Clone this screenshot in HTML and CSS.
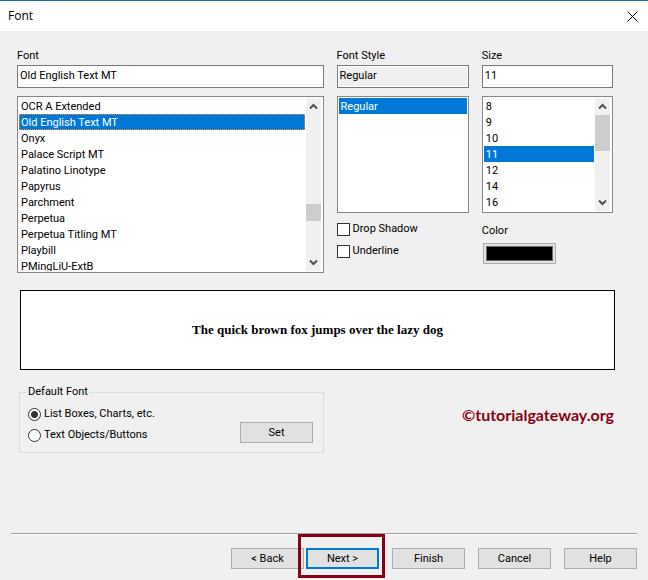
FILE: index.html
```html
<!DOCTYPE html>
<html lang="en">
<head>
<meta charset="utf-8">
<meta name="viewport" content="width=device-width, initial-scale=1">
<title>Font</title>
<link rel="stylesheet" href="styles.css">
</head>
<body>
<form class="dialog">
  <header class="titlebar">
    <h1 class="title">Font</h1>
    <button type="button" class="close" aria-label="Close">
      <svg width="11" height="11" viewBox="0 0 11 11" fill="none" stroke="#000"><path d="M.5 .5l10 10M10.5 .5l-10 10"/></svg>
    </button>
  </header>

  <main class="content">
    <div class="pickers">
      <section class="column">
        <label for="font-name">Font</label>
        <input class="field" id="font-name" type="text" value="Old English Text MT">
        <div class="listbox tall">
          <select size="11" aria-label="Fonts" class="focused">
            <option>OCR A Extended</option>
            <option selected>Old English Text MT</option>
            <option>Onyx</option>
            <option>Palace Script MT</option>
            <option>Palatino Linotype</option>
            <option>Papyrus</option>
            <option>Parchment</option>
            <option>Perpetua</option>
            <option>Perpetua Titling MT</option>
            <option>Playbill</option>
            <option>PMingLiU-ExtB</option>
          </select>
          <div class="scrollbar" aria-hidden="true">
            <svg class="arrow" viewBox="0 0 15 17"><path d="M4 10.500l3.500-3.500 3.500 3.500"/></svg>
            <div class="track late"><div class="thumb"></div></div>
            <svg class="arrow" viewBox="0 0 15 17"><path d="M4 6.500l3.500 3.500 3.500-3.500"/></svg>
          </div>
        </div>
      </section>

      <section class="column">
        <label for="font-style">Font Style</label>
        <input class="field readonly" id="font-style" type="text" value="Regular" readonly>
        <div class="listbox">
          <select size="7" aria-label="Font styles">
            <option selected>Regular</option>
          </select>
        </div>
        <div class="checks">
          <label class="choice"><input type="checkbox">Drop Shadow</label>
          <label class="choice"><input type="checkbox">Underline</label>
        </div>
      </section>

      <section class="column">
        <label for="font-size">Size</label>
        <input class="field" id="font-size" type="text" value="11">
        <div class="listbox">
          <select size="7" aria-label="Sizes">
            <option>8</option>
            <option>9</option>
            <option>10</option>
            <option selected>11</option>
            <option>12</option>
            <option>14</option>
            <option>16</option>
          </select>
          <div class="scrollbar" aria-hidden="true">
            <svg class="arrow" viewBox="0 0 15 17"><path d="M4 10.500l3.500-3.500 3.500 3.500"/></svg>
            <div class="track"><div class="thumb"></div></div>
            <svg class="arrow" viewBox="0 0 15 17"><path d="M4 6.500l3.500 3.500 3.500-3.500"/></svg>
          </div>
        </div>
        <div class="color">
          <label for="color">Color</label>
          <button type="button" class="button swatch" id="color"><span class="ink"></span></button>
        </div>
      </section>
    </div>

    <p class="preview">The quick brown fox jumps over the lazy dog</p>

    <div class="lower">
      <fieldset class="group">
        <legend>Default Font</legend>
        <div class="radios">
          <label class="choice"><input type="radio" name="target" checked>List Boxes, Charts, etc.</label>
          <label class="choice"><input type="radio" name="target">Text Objects/Buttons</label>
        </div>
        <button type="button" class="button">Set</button>
      </fieldset>
      <p class="credit">©tutorialgateway.org</p>
    </div>
  </main>

  <footer class="actions">
    <div class="pair">
      <button type="button" class="button">&lt; Back</button>
      <div class="marked"><button type="submit" class="button default">Next &gt;</button></div>
    </div>
    <button type="button" class="button">Finish</button>
    <button type="button" class="button">Cancel</button>
    <button type="button" class="button">Help</button>
  </footer>
</form>
</body>
</html>
```

FILE: styles.css
```css
* { box-sizing: border-box; }

body {
  margin: 0;
  background: #f0f0f0;
  color: #000;
  font: 11px/16px Roboto, "Liberation Sans", sans-serif;
}

input, select, button { font: inherit; color: inherit; margin: 0; }
p, h1 { margin: 0; }

.dialog {
  display: flex;
  flex-direction: column;
  min-height: 100vh;
  border-top: 1px solid #1a6fb8;
}

.titlebar {
  display: flex;
  align-items: center;
  justify-content: space-between;
  height: 30px;
  padding: 0 10px 0 8px;
  background: #fff;
}

.title { font: 12px/16px "Open Sans", "Noto Sans", sans-serif; }

.close {
  display: flex;
  padding: 0;
  border: 0;
  background: none;
}

.content { flex: 1; padding: 17px 33px 0 17px; }

.pickers {
  display: grid;
  grid-template-columns: 306fr 132fr 131fr;
  gap: 13px;
  padding-right: 2px;
}

.column { display: flex; flex-direction: column; min-width: 0; }

.field {
  width: 100%;
  height: 23px;
  margin: 1px 0 8px;
  padding: 0 2px 3px;
  border: 1px solid #7a7a7a;
  border-radius: 0;
  background: #fff;
}

.field.readonly { background: #f0f0f0; box-shadow: inset 0 0 0 1px #fff; }

.listbox {
  display: flex;
  height: 117px;
  padding: 1px;
  border: 1px solid #828790;
  background: #fff;
}

.listbox.tall { height: 177px; }

.listbox select {
  flex: 1;
  min-width: 0;
  height: 100%;
  padding: 0;
  border: 0;
  border-radius: 0;
  outline: 0;
  overflow: hidden;
  background: #fff;
}

.listbox option {
  height: 16px;
  min-height: 16px;
  padding: 2px 2px 0;
  border: 0;
}

.listbox option:checked {
  background: #0078d7 linear-gradient(#0078d7, #0078d7);
  color: #fff;
  -webkit-text-fill-color: #fff;
}

.focused option:checked { outline: 1px dotted #ff8728; outline-offset: -1px; }

.scrollbar {
  display: flex;
  flex-direction: column;
  width: 16px;
  margin-left: 1px;
  border-right: 1px solid #fff;
  background: #f0f0f0;
}

.arrow {
  width: 15px;
  height: 17px;
  flex: none;
  fill: none;
  stroke: #505050;
  stroke-width: 2;
}

.track { flex: 1; display: flex; flex-direction: column; }
.thumb { width: 15px; height: 46%; background: #cdcdcd; }
.late { justify-content: flex-end; padding-bottom: 33px; }
.late .thumb { height: 17px; }

.choice { display: flex; align-items: center; gap: 3px; }

.choice input {
  appearance: none;
  flex: none;
  width: 13px;
  height: 13px;
  border: 1px solid #333;
  background: #fff;
}

.choice input[type="radio"] { border-radius: 50%; }

.choice input[type="radio"]:checked {
  background: radial-gradient(circle, #333 3px, #fff 4px);
}

.choice input[type="checkbox"]:checked { background: #333; }

.checks {
  display: flex;
  flex-direction: column;
  gap: 6px;
  margin-top: 8px;
}

.color {
  display: flex;
  flex-direction: column;
  gap: 4px;
  margin-top: 10px;
}

.button {
  width: 73px;
  height: 21px;
  padding: 1px 0 0;
  border: 1px solid #adadad;
  border-radius: 0;
  background: #e1e1e1;
  text-align: center;
}

.button.default { padding: 0; border: 2px solid #0078d7; }

.button.swatch { display: flex; padding: 2px; margin-left: 1px; }

.ink {
  flex: 1;
  align-self: stretch;
  border: 1px solid #696969;
  background: #000;
}

.preview {
  display: flex;
  align-items: center;
  justify-content: center;
  height: 80px;
  margin: 17px 0 0 3px;
  border: 1px solid #000;
  background: #fff;
  font: bold 13px/16px "Old English Text MT", "Liberation Serif", serif;
}

.lower {
  display: flex;
  align-items: flex-start;
  justify-content: space-between;
  margin: 14px 0 0 2px;
}

.group {
  display: flex;
  align-items: flex-end;
  justify-content: space-between;
  width: 305px;
  margin: 0;
  padding: 6px 10px 9px 8px;
  border: 1px solid #dcdcdc;
}

.group legend { margin-left: -2px; padding: 0 2px; }

.radios { display: flex; flex-direction: column; gap: 5px; }

.credit {
  margin: 21px 1px 0 0;
  color: #8b0016;
  font: bold 16px/20px Lato, "Open Sans", sans-serif;
}

.actions {
  display: flex;
  justify-content: flex-end;
  gap: 13px;
  margin: 0 11px;
  padding: 14px 0 11px;
  border-top: 1px solid #a0a0a0;
  box-shadow: inset 0 1px #fff;
}

.pair { display: flex; gap: 2px; }

.marked { position: relative; }

.marked::after {
  content: "";
  position: absolute;
  inset: -14px -6px -9px -8px;
  border: 3px solid #880015;
  pointer-events: none;
}
```
